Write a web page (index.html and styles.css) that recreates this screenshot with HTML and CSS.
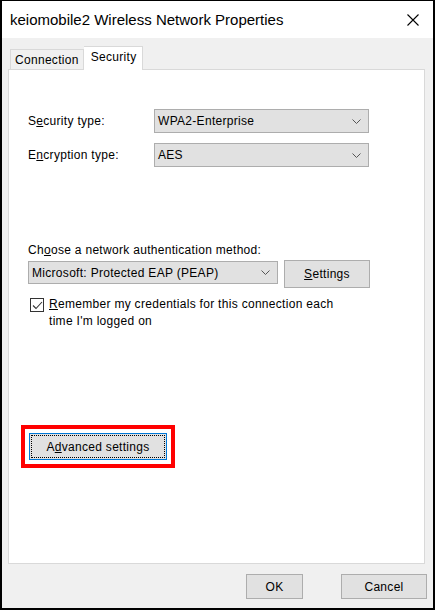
FILE: index.html
```html
<!DOCTYPE html>
<html lang="en">
    <head>
        <title>keiomobile2 Wireless Network Properties</title>
        <meta charset="UTF-8"/>
        <link rel="stylesheet" href="styles.css">
    </head>
    <body>
        <div id="janela">
            <div class="titulo">
                <span>keiomobile2 Wireless Network Properties</span>
                <svg class="fechar" width="12" height="12" viewBox="0 0 12 12">
                    <path d="M0.5 0.5 L11.5 11.5 M11.5 0.5 L0.5 11.5" stroke="#000" stroke-width="1.1" fill="none"/>
                </svg>
            </div>

            <div class="corpo">
                <div class="abas">
                    <div class="aba">Connection</div>
                    <div class="aba ativa">Security</div>
                </div>

                <div class="painel">
                    <div class="linha">
                        <label class="rotulo">S<u>e</u>curity type:</label>
                        <div class="combo largo">
                            <span>WPA2-Enterprise</span>
                            <svg class="seta" width="9" height="5" viewBox="0 0 9 5"><path d="M0.5 0.5 L4.5 4.5 L8.5 0.5" stroke="#555" fill="none"/></svg>
                        </div>
                    </div>
                    <div class="linha segunda">
                        <label class="rotulo">E<u>n</u>cryption type:</label>
                        <div class="combo largo">
                            <span>AES</span>
                            <svg class="seta" width="9" height="5" viewBox="0 0 9 5"><path d="M0.5 0.5 L4.5 4.5 L8.5 0.5" stroke="#555" fill="none"/></svg>
                        </div>
                    </div>

                    <div class="metodo">Ch<u>o</u>ose a network authentication method:</div>
                    <div class="linha autenticacao">
                        <div class="combo metodo_combo">
                            <span>Microsoft: Protected EAP (PEAP)</span>
                            <svg class="seta" width="9" height="5" viewBox="0 0 9 5"><path d="M0.5 0.5 L4.5 4.5 L8.5 0.5" stroke="#555" fill="none"/></svg>
                        </div>
                        <button class="botao configurar"><u>S</u>ettings</button>
                    </div>

                    <div class="lembrar">
                        <span class="caixa">
                            <svg width="11" height="11" viewBox="0 0 11 11"><path d="M1 5.5 L4 8.5 L10 2" stroke="#333" stroke-width="1.1" fill="none"/></svg>
                        </span>
                        <span class="texto_lembrar"><u>R</u>emember my credentials for this connection each<br/>time I'm logged on</span>
                    </div>

                    <div class="destaque">
                        <button class="botao avancado">A<u>d</u>vanced settings</button>
                    </div>
                </div>

                <div class="rodape">
                    <button class="botao ok">OK</button>
                    <button class="botao cancelar">Cancel</button>
                </div>
            </div>
        </div>
    </body>
</html>
```

FILE: styles.css
```css
* {
    margin: 0px;
    padding: 0px;
    box-sizing: border-box;
}

body {
    background: #000;
    font-family: "Segoe UI", "Liberation Sans", Arial, sans-serif;
    font-size: 12px;
    letter-spacing: 0.3px;
    color: #000;
}

#janela {
    width: 435px;
    height: 610px;
    border: 2px solid #000;
    border-top-width: 1px;
    background: #f0f0f0;
    display: flex;
    flex-direction: column;
}

.titulo {
    height: 37px;
    background: #fff;
    display: flex;
    align-items: center;
    justify-content: space-between;
    padding-left: 8px;
    padding-right: 14px;
    font-size: 15px;
    letter-spacing: 0px;
}

.titulo span {
    margin-top: -1px;
}

.corpo {
    flex: 1;
    display: flex;
    flex-direction: column;
    padding: 8px 8px 0px 6px;
}

.abas {
    display: flex;
    align-items: flex-end;
    height: 23px;
    padding-left: 2px;
}

.aba {
    height: 20px;
    padding: 0px 4px 0px 4px;
    border: 1px solid #d9d9d9;
    border-bottom: none;
    background: #f0f0f0;
    line-height: 20px;
}

.aba.ativa {
    height: 24px;
    margin-bottom: -1px;
    background: #fff;
    border-left: none;
    padding: 0px 6px 0px 7px;
    line-height: 21px;
    position: relative;
    z-index: 1;
}

.painel {
    height: 495px;
    background: #fff;
    border: 1px solid #d9d9d9;
    padding: 39px 19px 0px 19px;
}

.linha {
    display: flex;
    align-items: center;
}

.segunda {
    margin-top: 10px;
}

.rotulo {
    width: 126px;
}

u {
    text-decoration: underline;
    text-underline-offset: 1px;
}

.combo {
    height: 24px;
    background: #e1e1e1;
    border: 1px solid #adadad;
    display: flex;
    align-items: center;
    justify-content: space-between;
    padding: 0px 7px 0px 3px;
}

.largo {
    width: 215px;
}

.metodo {
    margin-top: 75px;
    line-height: 16px;
}

.autenticacao {
    margin-top: 2px;
    align-items: flex-start;
}

.metodo_combo {
    width: 250px;
    height: 23px;
    margin-top: 1px;
}

.botao {
    font-family: inherit;
    font-size: 12px;
    letter-spacing: 0.3px;
    color: #000;
    background: #e1e1e1;
    border: 1px solid #adadad;
}

.configurar {
    width: 86px;
    height: 28px;
    margin-left: 6px;
}

.lembrar {
    display: flex;
    margin-top: 8px;
    margin-left: 2px;
    line-height: 17px;
}

.caixa {
    width: 14px;
    height: 14px;
    border: 1px solid #333;
    background: #fff;
    display: flex;
    align-items: center;
    justify-content: center;
    margin-top: 2px;
    margin-right: 5px;
}

.destaque {
    display: inline-block;
    margin-top: 95px;
    margin-left: -7px;
    border: 4px solid #f00;
    padding: 4px;
}

.avancado {
    display: block;
    width: 138px;
    height: 27px;
    border: 1px solid #0078d7;
    outline: 1px dotted #000;
    outline-offset: -3px;
}

.rodape {
    display: flex;
    justify-content: flex-end;
    padding-top: 10px;
    margin-right: -2px;
}

.ok {
    width: 57px;
    height: 25px;
    margin-right: 38px;
}

.cancelar {
    width: 86px;
    height: 25px;
}
```
